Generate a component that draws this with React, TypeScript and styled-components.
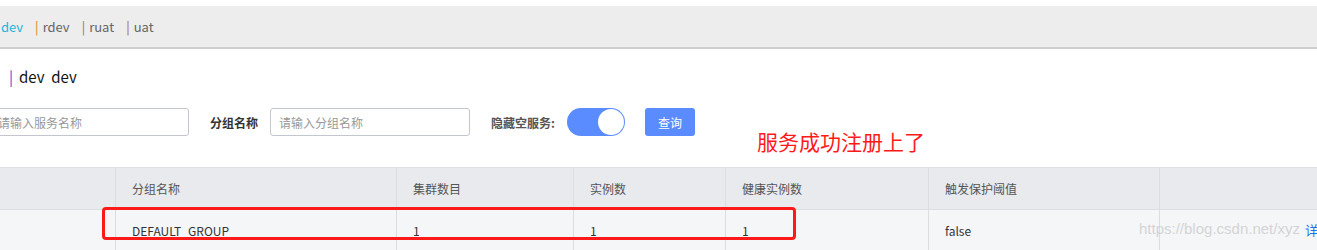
import { FC } from "react";
import styled, { createGlobalStyle } from "styled-components";

const GlobalStyle = createGlobalStyle`
  html, body { margin: 0; padding: 0; background: #fff; }
  body {
    font-family: "Noto Sans CJK SC", "Noto Sans", sans-serif;
    font-size: 12px;
    color: #333;
    overflow: hidden;
  }
`;

// styled components
const Page = styled.div`
  position: relative;
  width: 1317px;
  height: 250px;
  overflow: hidden;
  padding-top: 6px;
  box-sizing: border-box;
`;

const NavBar = styled.div`
  height: 41px;
  background: #ededed;
  border-bottom: 2px solid #cfcfcf;
  display: flex;
  align-items: center;
  padding-left: 1px;
  gap: 12px;
`;

const Tab = styled.span<{ $bar?: string; $active?: boolean }>`
  font-size: 13px;
  line-height: 1;
  color: ${(p) => (p.$active ? "#1fb5dc" : "#666")};
  display: flex;
  align-items: center;
  &::before {
    content: ${(p) => (p.$bar ? '"|"' : "none")};
    color: ${(p) => p.$bar || "transparent"};
    margin-right: 4px;
  }
`;

const TitleRow = styled.div`
  height: 56px;
  display: flex;
  align-items: center;
  padding-left: 9px;
  padding-bottom: 2px;
  box-sizing: border-box;
  font-size: 15px;
  color: #111;
  gap: 6px;
`;

const TitleBar = styled.span`
  color: #2d5bd1;
`;

const FormRow = styled.div`
  display: flex;
  align-items: center;
  margin-left: -11px;
  margin-top: 3px;
  height: 28px;
`;

const Input = styled.div<{ $w: number }>`
  width: ${(p) => p.$w}px;
  height: 28px;
  box-sizing: border-box;
  border: 1px solid #c4c6cf;
  border-radius: 3px;
  display: flex;
  align-items: center;
  padding-left: 8px;
  color: #999;
  font-size: 12px;
  white-space: nowrap;
`;

const Label = styled.span<{ $ml: number; $mr: number; $color?: string }>`
  margin-left: ${(p) => p.$ml}px;
  margin-right: ${(p) => p.$mr}px;
  font-weight: 700;
  color: ${(p) => p.$color || "#333"};
  font-size: 12px;
`;

const Switch = styled.div`
  width: 58px;
  height: 28px;
  border-radius: 14px;
  background: #5b8cff;
  box-sizing: border-box;
  padding: 1px;
  display: flex;
  justify-content: flex-end;
  &::after {
    content: "";
    width: 26px;
    height: 26px;
    border-radius: 50%;
    background: #fff;
  }
`;

const QueryButton = styled.div`
  margin-left: 20px;
  width: 50px;
  height: 28px;
  border-radius: 3px;
  background: #5a8cff;
  color: #fff;
  font-size: 12px;
  display: flex;
  align-items: center;
  justify-content: center;
`;

const Note = styled.div`
  position: absolute;
  left: 757px;
  top: 127px;
  color: #ff1a1a;
  font-size: 21px;
  line-height: 28px;
`;

const Table = styled.div`
  margin-top: 31px;
  margin-left: -44px;
  border-top: 1px solid #e0e1e4;
`;

const Row = styled.div<{ $head?: boolean }>`
  display: grid;
  grid-template-columns: 160px 281px 177px 152px 203px 231px 200px;
  height: 41px;
  background: ${(p) => (p.$head ? "#e9eaee" : "#f5f6f8")};
  border-bottom: 1px solid #dcdde1;
`;

const Cell = styled.div<{ $head?: boolean }>`
  display: flex;
  align-items: center;
  padding-left: 16px;
  border-right: 1px solid #dcdde1;
  color: ${(p) => (p.$head ? "#555" : "#333")};
  font-size: 12px;
  white-space: nowrap;
`;

const Highlight = styled.div`
  position: absolute;
  left: 102px;
  top: 207px;
  width: 694px;
  height: 33px;
  box-sizing: border-box;
  border: 3px solid #ff1a1a;
  border-radius: 4px;
`;

const Watermark = styled.div`
  position: absolute;
  left: 1139px;
  top: 220px;
  font-family: "Liberation Sans", Arial, sans-serif;
  font-size: 15px;
  color: rgba(200, 200, 200, 0.75);
  white-space: nowrap;
`;

const DetailLink = styled.span`
  position: absolute;
  left: 1305px;
  top: 220px;
  color: #1a73e8;
  font-size: 13px;
`;

const tabs = [
  { name: "dev", active: true },
  { name: "rdev", bar: "#c8862a" },
  { name: "ruat", bar: "#b06858" },
  { name: "uat", bar: "#a85a50" },
];

const headers = ["", "分组名称", "集群数目", "实例数", "健康实例数", "触发保护阈值", ""];
const cells = ["", "DEFAULT_GROUP", "1", "1", "1", "false", ""];

const App: FC = () => (
  <Page>
    <GlobalStyle />
    <NavBar>
      {tabs.map((t) => (
        <Tab key={t.name} $bar={t.bar} $active={t.active}>
          {t.name}
        </Tab>
      ))}
    </NavBar>

    <TitleRow>
      <TitleBar>|</TitleBar>
      <span>dev&nbsp; dev</span>
    </TitleRow>

    <FormRow>
      <Input $w={200}>请输入服务名称</Input>
      <Label $ml={21} $mr={12}>分组名称</Label>
      <Input $w={200}>请输入分组名称</Input>
      <Label $ml={21} $mr={12} $color="#555">隐藏空服务:</Label>
      <Switch />
      <QueryButton>查询</QueryButton>
    </FormRow>

    <Table>
      <Row $head>
        {headers.map((h, i) => (
          <Cell $head key={i}>{h}</Cell>
        ))}
      </Row>
      <Row>
        {cells.map((c, i) => (
          <Cell key={i}>{c}</Cell>
        ))}
      </Row>
    </Table>

    <Note>服务成功注册上了</Note>
    <Highlight />
    <Watermark>https://blog.csdn.net/xyz</Watermark>
    <DetailLink>详</DetailLink>
  </Page>
);

export default App;
